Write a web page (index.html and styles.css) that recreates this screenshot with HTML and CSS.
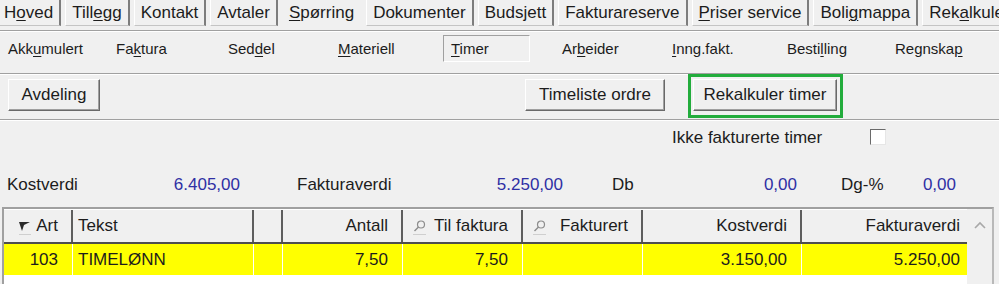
FILE: index.html
```html
<!DOCTYPE html>
<html lang="nb">
<head>
  <meta charset="UTF-8" />
  <title>Spørring - Timer</title>
  <link rel="stylesheet" href="styles.css">
</head>
<body>

  <div class="tabs">
    <span class="tab">H<u>o</u>ved</span>
    <span class="tab">Till<u>e</u>gg</span>
    <span class="tab">Kontakt</span>
    <span class="tab">Avtaler</span>
    <span class="tab active"><u>S</u>pørring</span>
    <span class="tab">Dokumenter</span>
    <span class="tab">Budsjett</span>
    <span class="tab">Fakturareserve</span>
    <span class="tab"><u>P</u>riser service</span>
    <span class="tab">Boli<u>g</u>mappa</span>
    <span class="tab">Rek<u>a</u>lkuler timer</span>
  </div>

  <div class="subtabs">
    <span class="subtab">Akk<u>u</u>mulert</span>
    <span class="subtab">Fa<u>k</u>tura</span>
    <span class="subtab">Sed<u>d</u>el</span>
    <span class="subtab"><u>M</u>ateriell</span>
    <span class="subtab current"><u>T</u>imer</span>
    <span class="subtab">Ar<u>b</u>eider</span>
    <span class="subtab"><u>I</u>nng.fakt.</span>
    <span class="subtab">Besti<u>l</u>ling</span>
    <span class="subtab">Regnska<u>p</u></span>
  </div>

  <div class="toolbar">
    <button class="btn btn-avdeling">Avdeling</button>
    <div class="actions">
      <button class="btn btn-timeliste">Timeliste ordre</button>
      <div class="highlight">
        <button class="btn btn-rekalk">Rekalkuler timer</button>
      </div>
    </div>
  </div>

  <div class="filter">
    <span>Ikke fakturerte timer</span>
    <span class="check"></span>
  </div>

  <div class="summary">
    <div class="sum sum-kost"><span>Kostverdi</span><span class="val">6.405,00</span></div>
    <div class="sum sum-fakt"><span>Fakturaverdi</span><span class="val">5.250,00</span></div>
    <div class="sum sum-db"><span>Db</span><span class="val">0,00</span></div>
    <div class="sum sum-dg"><span>Dg-%</span><span class="val">0,00</span></div>
  </div>

  <div class="grid">
    <div class="cols">
      <div class="hrow">
        <div class="hcell right">
          <span class="ico"><svg width="12" height="11" viewBox="0 0 12 11"><polygon points="0,1 11,1 5,4 3,10" fill="#2a2a2a"/></svg></span>
          <span>Art</span>
        </div>
        <div class="hcell left">Tekst</div>
        <div class="hcell"></div>
        <div class="hcell right">Antall</div>
        <div class="hcell search">
          <span class="ico"><svg width="13" height="12" viewBox="0 0 13 12"><circle cx="8" cy="4.5" r="3.5" fill="none" stroke="#8c8c8c" stroke-width="1.2"/><line x1="5.5" y1="7" x2="1.5" y2="11" stroke="#8c8c8c" stroke-width="1.4"/></svg></span>
          <span>Til faktura</span>
        </div>
        <div class="hcell search">
          <span class="ico"><svg width="13" height="12" viewBox="0 0 13 12"><circle cx="8" cy="4.5" r="3.5" fill="none" stroke="#8c8c8c" stroke-width="1.2"/><line x1="5.5" y1="7" x2="1.5" y2="11" stroke="#8c8c8c" stroke-width="1.4"/></svg></span>
          <span>Fakturert</span>
        </div>
        <div class="hcell right">Kostverdi</div>
        <div class="hcell right last">Fakturaverdi</div>
      </div>
      <div class="drow">
        <div class="dcell right">103</div>
        <div class="dcell left">TIMELØNN</div>
        <div class="dcell"></div>
        <div class="dcell right">7,50</div>
        <div class="dcell right">7,50</div>
        <div class="dcell right"></div>
        <div class="dcell right">3.150,00</div>
        <div class="dcell right last">5.250,00</div>
      </div>
    </div>
    <div class="vscroll">
      <svg width="12" height="8" viewBox="0 0 12 8"><polyline points="1,7 6,2 11,7" fill="none" stroke="#a8a8a8" stroke-width="1.6"/></svg>
    </div>
  </div>

</body>
</html>
```

FILE: styles.css
```css
body {
  margin: 0;
  width: 999px;
  height: 284px;
  overflow: hidden;
  background-color: #f0f0f0;
  font-family: "Liberation Sans", Arial, sans-serif;
  font-size: 17px;
  color: #1c1c1c;
}
u {
  text-decoration-thickness: 1px;
  text-underline-offset: 2px;
}

/* hovedfaner */
.tabs {
  display: flex;
  gap: 4px;
  height: 30px;
  border-bottom: 1px solid #a0a0a0;
  box-shadow: 0 1px 0 #fff;
  white-space: nowrap;
  overflow: hidden;
}
.tab {
  flex: none;
  height: 26px;
  line-height: 26px;
  padding: 0 6px;
  box-sizing: border-box;
  border-left: 1px solid #fff;
  border-right: 2px solid #7d7d7d;
  border-bottom: 1px solid #c4c4c4;
}
.tab:first-child {
  margin-left: -3px;
}
.tab.active {
  border-color: transparent;
}

/* underfaner */
.subtabs {
  display: grid;
  grid-template-columns: 108px 112px 110px 113px 111px 110px 115px 108px 1fr;
  justify-items: start;
  align-items: start;
  height: 43px;
  padding-top: 4px;
  box-sizing: border-box;
  border-bottom: 1px solid #a0a0a0;
  box-shadow: 0 1px 0 #fff;
  font-size: 15px;
}
.subtab {
  height: 27px;
  line-height: 25px;
  padding: 0 7px;
  border: 1px solid transparent;
  box-sizing: border-box;
  white-space: nowrap;
}
.subtab.current {
  width: 87px;
  border-color: #a0a0a0 #fff #fff #a0a0a0;
}

/* knapper */
.toolbar {
  display: flex;
  align-items: flex-start;
  height: 46px;
  padding-left: 8px;
  box-sizing: border-box;
  border-bottom: 1px solid #a0a0a0;
  box-shadow: 0 1px 0 #fff;
}
.btn {
  height: 32px;
  margin-top: 5px;
  padding: 0;
  font: inherit;
  color: #1c1c1c;
  background: #f0f0f0;
  border: 1px solid;
  border-color: #fff #696969 #696969 #fff;
  box-shadow: inset -1px -1px 0 #a0a0a0;
}
.btn-avdeling {
  width: 92px;
}
.btn-timeliste {
  width: 140px;
}
.btn-rekalk {
  width: 144px;
  margin-top: 0;
}
.actions {
  display: flex;
  align-items: flex-start;
  gap: 23px;
  margin-left: auto;
  margin-right: 156px;
}
.highlight {
  border: 3px solid #22ac3c;
  padding: 2px 3px 4px 2px;
}

.filter {
  display: flex;
  align-items: center;
  height: 36px;
  padding-left: 672px;
}
.check {
  width: 14px;
  height: 14px;
  margin-left: 48px;
  margin-top: -3px;
  background: #fff;
  border: 1px solid;
  border-color: #6a6a6a #e6e6e6 #e6e6e6 #6a6a6a;
}

/* summer */
.summary {
  display: grid;
  grid-template-columns: 240px 323px 234px 159px;
  margin-top: 18px;
  line-height: 22px;
}
.sum {
  display: flex;
  justify-content: space-between;
}
.sum .val {
  color: #2f2fa4;
}
.sum-kost { padding-left: 7px; }
.sum-fakt { padding-left: 57px; }
.sum-db { padding-left: 49px; }
.sum-dg { padding-left: 44px; }

/* tabell */
.grid {
  display: flex;
  width: 992px;
  height: 80px;
  margin: 11px 0 0 2px;
  box-sizing: border-box;
  border: 2px solid #a0a0a0;
  border-bottom: none;
  border-right-color: #b9b9b9;
  background: #fff;
}
.cols {
  width: 963px;
  padding-top: 1px;
}
.hrow,
.drow {
  display: grid;
  grid-template-columns: 69px 181px 29px 120px 120px 120px 159px 165px;
}
.hrow {
  height: 34px;
  background: #f0f0f0;
  border-bottom: 2px solid #4e4e4e;
  box-sizing: border-box;
}
.hcell {
  display: flex;
  align-items: center;
  gap: 5px;
  padding: 0 13px 0 5px;
  border-right: 2px solid #5e5e5e;
  white-space: nowrap;
}
.hcell.right { justify-content: flex-end; }
.hcell.search {
  justify-content: space-between;
  padding-left: 10px;
}
.hcell.last {
  border-right: none;
  padding-right: 7px;
}
.ico {
  display: flex;
  padding-bottom: 2px;
  border-bottom: 1px solid #cfcfcf;
  margin-top: 3px;
}
.drow {
  height: 31px;
  background: #ffff00;
  color: #1d1d1d;
}
.dcell {
  line-height: 31px;
  padding: 0 14px 0 5px;
  border-right: 1px solid #fff;
  white-space: nowrap;
}
.dcell.right { text-align: right; }
.dcell.last {
  border-right: none;
  padding-right: 7px;
}
.vscroll {
  width: 25px;
  background: #f0f0f0;
  display: flex;
  justify-content: center;
  padding-top: 12px;
  box-sizing: border-box;
}
.vscroll svg {
  display: block;
}
```
